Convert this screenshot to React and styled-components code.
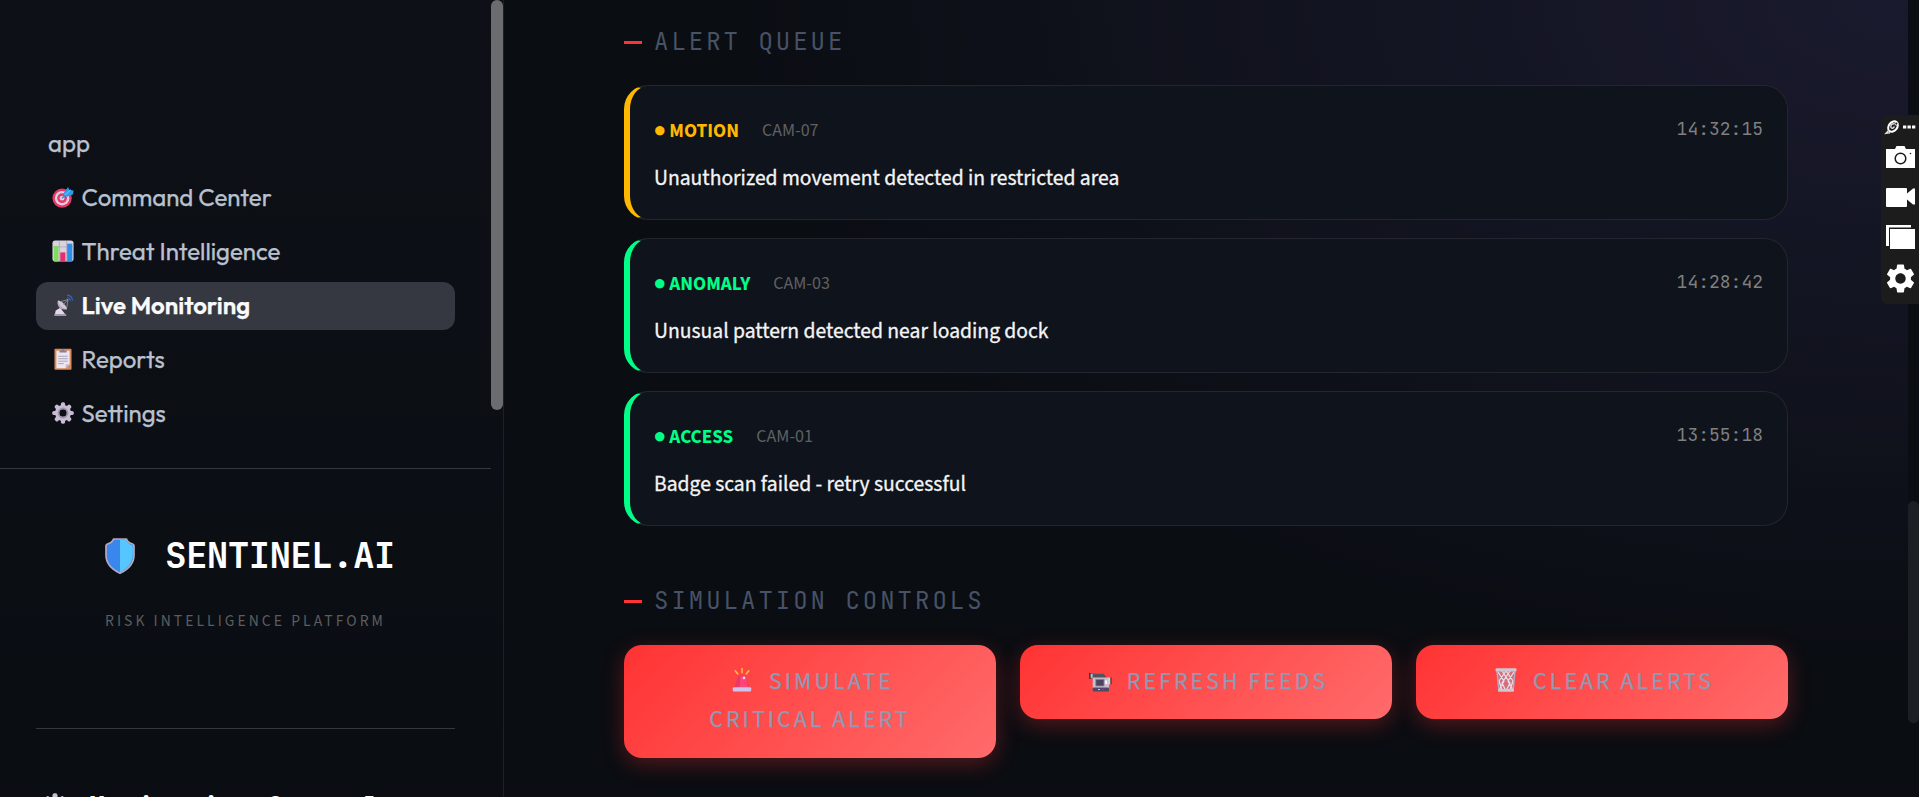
import React from "react";
import styled, { createGlobalStyle } from "styled-components";

const sans = `"Source Sans 3", "Noto Sans CJK JP", sans-serif`;
const mono = `"JetBrains Mono", "DejaVu Sans Mono", monospace`;
const round = `Outfit, Lato, sans-serif`;

const Global = createGlobalStyle`
  * { box-sizing: border-box; }
  body { margin: 0; background: #0a0d12; overflow: hidden; font-family: ${sans}; }
`;

const Page = styled.div`
  display: flex;
  width: 100vw;
  height: 100vh;
  overflow: hidden;
`;

/* ---------- sidebar ---------- */
const Sidebar = styled.aside`
  display: flex;
  flex: none;
  width: 504px;
  height: 100%;
  overflow: hidden;
  border-right: 1px solid #1d2024;
  background: linear-gradient(180deg, #0d1117 0%, #0a0d12 100%);
`;
const SideBody = styled.div`
  width: 491px;
  flex: none;
`;
const SideScroll = styled.div`
  width: 12px;
  height: 410px;
  background: #6b6c6f;
  border-radius: 6px;
`;
const Nav = styled.nav`
  display: flex;
  flex-direction: column;
  gap: 6px;
  padding: 120px 36px 30px;
  height: 468px;
`;
const NavItem = styled.a`
  display: flex;
  align-items: center;
  gap: 5.5px;
  height: 48px;
  padding: 0 12px 2px;
  border-radius: 12px;
  font-family: ${round};
  font-size: 24px;
  font-weight: ${(p) => (p.$active ? 600 : 400)};
  -webkit-text-stroke: 0.25px currentColor;
  color: ${(p) => (p.$active ? "#fafafa" : "#b9c0cf")};
  background: ${(p) => (p.$active ? "#353741" : "transparent")};
`;
const NavIcon = styled.span`
  display: flex;
  justify-content: center;
  width: 28px;
  padding-left: 1px;
  svg { width: 22px; height: 22px; }
`;
const Rule = styled.div`
  height: 1px;
  margin: 0 ${(p) => p.$inset || 0}px;
  background: #35383c;
`;
const Brand = styled.div`
  height: 259px;
  padding-top: 61px;
`;
const BrandRow = styled.div`
  display: flex;
  align-items: center;
  height: 50px;
  padding-left: 102px;
  gap: 27px;
  svg { width: 36px; height: 38px; margin-top: 2px; }
`;
const BrandName = styled.span`
  font: 700 36px/50px ${mono};
  letter-spacing: -0.72px;
  color: #fff;
  white-space: nowrap;
`;
const Tagline = styled.div`
  margin-top: 31px;
  padding-left: 105px;
  font: 400 15.6px/20px ${sans};
  letter-spacing: 3.03px;
  color: #5c5d5e;
  white-space: nowrap;
`;
const SideHeading = styled.div`
  display: flex;
  align-items: flex-start;
  gap: 21px;
  padding: 57px 42px 0;
  color: #fff;
  font: 700 27px/40px ${mono};
  white-space: nowrap;
  svg { width: 26px; height: 26px; flex: none; margin-top: 7px; }
`;

/* ---------- main ---------- */
const Main = styled.main`
  flex: 1;
  height: 100%;
  overflow: hidden;
  padding: 24px 120px 0;
  background: radial-gradient(ellipse at 100% 0%, #1a1a2e 0%, #0a0d12 60%);
`;
const SectionTitle = styled.h2`
  display: flex;
  align-items: center;
  gap: 12px;
  height: 36px;
  margin: 0 0 ${(p) => p.$gap}px;
  font: 400 24px/36px ${mono};
  letter-spacing: 3px;
  color: #475266;
  &::before {
    content: "";
    width: 18px;
    height: 3px;
    background: #ff3333;
  }
`;
const AlertList = styled.div`
  display: flex;
  flex-direction: column;
  gap: 18px;
  margin-bottom: 57px;
`;
const AlertCard = styled.article`
  height: 135px;
  padding: 29px 24px 0 24px;
  border: 1px solid #23262f;
  border-left: 6px solid ${(p) => p.$tone};
  border-radius: 24px;
  background: #0f131b;
`;
const AlertTop = styled.div`
  display: flex;
  align-items: center;
  height: 31px;
`;
const Kind = styled.b`
  font: 700 19.2px/30px ${sans};
  color: ${(p) => p.$tone};
  margin-right: 23px;
`;
const Cam = styled.span`
  font: 400 18px/30px ${sans};
  color: #5f6062;
`;
const Time = styled.time`
  margin: -4px 0 0 auto;
  font: 400 18px/30px ${mono};
  color: #808080;
`;
const AlertText = styled.p`
  margin: 17px 0 0;
  font: 400 21.6px/32px ${sans};
  -webkit-text-stroke: 0.3px currentColor;
  color: #f4f4f5;
`;
const Buttons = styled.div`
  display: grid;
  grid-template-columns: repeat(3, 372px);
  gap: 24px;
  align-items: start;
`;
const ActionButton = styled.button`
  border: 0;
  border-radius: 18px;
  padding: 18px 36px;
  background: linear-gradient(135deg, #ff3333, #ff6b6b);
  box-shadow: 0 6px 22px rgba(255, 51, 51, 0.3);
  font: 400 24px/38.4px ${sans};
  letter-spacing: 3px;
  -webkit-text-stroke: 0.25px currentColor;
  color: #9299b3;
  text-align: center;
  svg { width: 24px; height: 24px; vertical-align: -3px; margin: 0 15px 0 4px; }
`;
const ScrollTrack = styled.div`
  flex: none;
  width: 11px;
  height: 100%;
  padding-top: 501px;
  background: #0a0d12;
`;
const ScrollThumb = styled.div`
  height: 222px;
  background: #1c1f24;
  border-radius: 6px;
`;

/* ---------- floating capture toolbar ---------- */
const Capture = styled.div`
  position: absolute;
  top: 115px;
  right: 0;
  display: flex;
  width: 38px;
  height: 189px;
  border-radius: 6px 0 0 6px;
  background: #1c1c1c;
`;

const Svg = (p) => <svg xmlns="http://www.w3.org/2000/svg" viewBox="0 0 24 24" {...p} />;

const Target = () => (
  <Svg>
    <circle cx="11" cy="13.3" r="10.5" fill="#e93766" />
    <circle cx="11" cy="13.3" r="7.9" fill="#dccfe2" />
    <circle cx="11" cy="13.3" r="5.3" fill="#e93766" />
    <circle cx="11" cy="13.3" r="2.6" fill="#dccfe2" />
    <path d="M11 13.3 17 7" stroke="#3d8fe0" strokeWidth="1.6" />
    <path d="M12.5 8.2 17.5 1 19 4.4 23.5 5 23 9 16 12Z" fill="#2f9bea" />
    <path d="m14 10 6.5-6" stroke="#57c4ff" strokeWidth="1.2" />
  </Svg>
);
const Chart = () => (
  <Svg>
    <rect x=".5" y=".5" width="23" height="23" rx="3" fill="#d9d3e0" />
    <path d="M.5 7.5h23M8 1v22M16 1v22" stroke="#aaa1b5" strokeWidth=".8" />
    <path d="M2 6.5h5v17H2Z" fill="#7fdc5c" />
    <path d="M9 13.5h5.6v10H9Z" fill="#e5306f" />
    <path d="M16.5 4h5.7v19.5h-5.7Z" fill="#2f8fe6" />
  </Svg>
);
const Dish = () => (
  <Svg>
    <path d="m3 23 1-5 5-3 6 8Z" fill="#e2d8e8" />
    <path d="M2.5 21.8h13V24h-13Z" fill="#a395b0" />
    <path d="M6.500 7C4.500 12 8.500 18.500 16.500 16.500Z" fill="#b5a9bd" />
    <path d="M6.500 7c4 .5 9 5 10 9.500-4 0-9.500-4.500-10-9.500Z" fill="#d3c8d8" />
    <path d="m9 8.500 8.500-2.500-1.500 9M12 12l5.500-6" stroke="#a9a0b0" strokeWidth=".8" fill="none" />
    <path d="M16.500 3.800q3.300.4 3.300 3.600M16.500 1.200q5.600.6 5.800 6.200" stroke="#3467be" strokeWidth="1.300" fill="none" />
  </Svg>
);
const Clipboard = () => (
  <Svg>
    <rect x="2.700" y=".8" width="18.600" height="22.800" rx="1" fill="#d98b56" />
    <path d="M4.800 3h14.400v14.800l-4.300 4.200H4.800Z" fill="#ece6f2" />
    <path d="m19.200 17.800-4.300 4.200v-4.200Z" fill="#c7b8cf" />
    <path d="M8 5V2.700h2.300a1.800 1.800 0 0 1 3.400 0H16V5Z" fill="#8c7d94" />
    <path d="M6.800 9h10.400M6.800 11.700h10.400M6.800 14.400h10.400M6.800 17h6" stroke="#a69bb3" strokeWidth="1" />
  </Svg>
);
const Gear = () => (
  <Svg>
    <g fill="#c9bdd6">
      {[0, 45, 90, 135, 180, 225, 270, 315].map((a) => (
        <rect key={a} x="9.700" y=".3" width="4.600" height="6" rx="1.800" transform={`rotate(${a} 12 12)`} />
      ))}
    </g>
    <circle cx="12" cy="12" r="6.400" fill="none" stroke="#c9bdd6" strokeWidth="4.600" />
    <circle cx="12" cy="12" r="5" fill="none" stroke="#9d91ab" strokeWidth="1.800" />
  </Svg>
);
const Shield = () => (
  <Svg viewBox="0 0 36 38">
    <path d="M11.500 2h13q1 3.500 6.500 5.200 1 .5 1 1.500V18c0 8-6 14.500-14 18.300C10 32.500 4 26 4 18V8.700q0-1 1-1.500 5.500-1.700 6.500-5.200Z" fill="#3986ec" stroke="#b3a8c0" strokeWidth="1.700" strokeLinejoin="round" />
    <path d="M18 3h6q1.500 3.800 6.800 5.700V18c0 7.500-5.300 13.500-12.800 17.200Z" fill="#55c6ff" />
  </Svg>
);
const Siren = () => (
  <Svg>
    <path d="M12 .5v4.300M5.200 2.800l2.600 3.200M18.800 2.800l-2.600 3.200" stroke="#ffbd45" strokeWidth="1.500" strokeLinecap="round" />
    <path d="M4.500 20 7.400 9.500Q8.200 7 12 7q3.800 0 4.600 2.500L19.500 20Z" fill="#e8386a" />
    <path d="M9.500 20 10.500 8Q15.500 7 16.300 10L18.500 20Z" fill="#ff4478" />
    <circle cx="14" cy="9.900" r="1.300" fill="#ffd3dd" />
    <rect x="2.800" y="19.300" width="18.400" height="4.200" rx="1" fill="#cfc3ee" />
  </Svg>
);
const Camcorder = () => (
  <Svg>
    <path d="M1 5h3.500l1 .8h10l2.800 3.200v2H4.200v-1H1Z" fill="#56505f" />
    <path d="M1 5h1.700v6H1Z" fill="#3d3947" />
    <path d="M2.700 5.800h2v4h-2Z" fill="#a7c4d1" />
    <rect x="4.700" y="9.500" width="16.300" height="11" fill="#c6bfcc" />
    <rect x="7.800" y="11.300" width="8.200" height="6.700" fill="#4b4360" stroke="#8d86a0" strokeWidth=".8" />
    <rect x="17.300" y="12.500" width="1.800" height="3.500" fill="#fff" />
    <rect x="20.300" y="9.500" width="2" height="6.800" fill="#d8d3de" />
    <rect x="22.300" y="9.500" width="1.700" height="6.800" fill="#56505f" />
    <rect x="4.700" y="19.500" width="16.300" height="4" rx=".8" fill="#514868" />
    <path d="M10 21.500h2" stroke="#c6bfcc" />
    <path d="M14.500 21.500h1" stroke="#e5306f" />
  </Svg>
);
const Basket = () => (
  <Svg>
    <path d="M2.500 2.500h19L19.600 23H4.400Z" fill="#a99bb0" fillOpacity=".5" />
    <path d="m4 4 6 9-4.500 8M8 3l8 12-4 8M12 3l7 10-3 9M20 4l-6 9 4.500 8M16 3 8 15l4 8M12 3l-7 10 3 9" stroke="#e6dceb" strokeWidth="1.300" fill="none" />
    <path d="M3 3 4.800 22M21 3l-1.800 19" stroke="#b5a9bd" strokeWidth="1.500" />
    <rect x="1.500" y=".3" width="21" height="3.200" rx="1.300" fill="#cfc6d4" />
    <rect x="4" y="21" width="16" height="2.700" rx="1" fill="#cfc6d4" />
  </Svg>
);

const CaptureIcons = () => (
  <svg width="38" height="189" viewBox="0 0 38 189" fill="#fff">
    <ellipse cx="12" cy="11.500" rx="4.200" ry="5.800" transform="rotate(38 12 11.500)" fill="none" stroke="#fff" strokeWidth="2" />
    <path d="M13.300 8.800q-3.500-.3-3.500 2.700 0 2.300 2.400 1.500l1.300-1.500M8 15l-3 3.300 4-.6" fill="none" stroke="#ddd" strokeWidth="1.400" />
    <circle cx="15.300" cy="8.600" r="1.500" fill="#1c1c1c" stroke="#fff" />
    <path d="M22 10.500h3.300v3H22Zm4.500 0h3.300v3h-3.300Zm4.500 0h3.300v3H31Z" />
    <path d="M5 34h9l1.500-3h8L25 34h9v19H5Z" />
    <circle cx="19.500" cy="43.500" r="5.300" fill="none" stroke="#1c1c1c" strokeWidth="1.500" />
    <circle cx="29.500" cy="38.500" r=".8" fill="#1c1c1c" />
    <path d="M6 73h19a1 1 0 0 1 1 1v4.500l6-5h2v16h-2l-6-5V91a1 1 0 0 1-1 1H6a1 1 0 0 1-1-1V74a1 1 0 0 1 1-1Z" />
    <path d="M5 110h25v2.500H8V131H5Z" />
    <path d="M9 114h25v20H9Z" />
    <path transform="translate(2.100 146.100) scale(1.450)" d="M19.140 12.940c.04-.3.06-.61.06-.94 0-.32-.02-.64-.07-.94l2.030-1.580a.49.49 0 0 0 .12-.61l-1.920-3.320a.488.488 0 0 0-.59-.22l-2.390.96c-.5-.38-1.030-.7-1.620-.94l-.36-2.540a.484.484 0 0 0-.48-.41h-3.840c-.24 0-.43.17-.47.41l-.36 2.540c-.59.24-1.130.57-1.620.94l-2.390-.96c-.22-.08-.47 0-.59.22L2.740 8.870c-.12.21-.08.47.12.61l2.030 1.580c-.05.3-.09.63-.09.94s.02.64.07.94l-2.030 1.580a.49.49 0 0 0-.12.610l1.920 3.320c.12.220.370.290.590.220l2.390-.96c.5.380 1.030.7 1.620.94l.36 2.540c.05.240.24.410.48.410h3.840c.24 0 .440-.170.470-.410l.36-2.540c.59-.240 1.130-.560 1.620-.94l2.390.96c.220.080.470 0 .590-.220l1.920-3.320c.120-.220.070-.470-.120-.610l-2.010-1.580zM12 15.600c-1.980 0-3.600-1.620-3.600-3.600s1.620-3.600 3.600-3.600 3.600 1.620 3.600 3.600-1.620 3.600-3.600 3.600z" />
  </svg>
);

const nav = [
  { label: "app" },
  { label: "Command Center", icon: <Target /> },
  { label: "Threat Intelligence", icon: <Chart /> },
  { label: "Live Monitoring", icon: <Dish />, active: true },
  { label: "Reports", icon: <Clipboard /> },
  { label: "Settings", icon: <Gear /> },
];
const alerts = [
  { kind: "MOTION", cam: "CAM-07", time: "14:32:15", tone: "#ffb800", text: "Unauthorized movement detected in restricted area" },
  { kind: "ANOMALY", cam: "CAM-03", time: "14:28:42", tone: "#00ff88", text: "Unusual pattern detected near loading dock" },
  { kind: "ACCESS", cam: "CAM-01", time: "13:55:18", tone: "#00ff88", text: "Badge scan failed - retry successful" },
];

export default function App() {
  return (
    <Page>
      <Global />
      <Sidebar>
        <SideBody>
          <Nav>
            {nav.map((n) => (
              <NavItem key={n.label} $active={n.active}>
                {n.icon && <NavIcon>{n.icon}</NavIcon>}
                <span>{n.label}</span>
              </NavItem>
            ))}
          </Nav>
          <Rule />
          <Brand>
            <BrandRow>
              <Shield />
              <BrandName>SENTINEL.AI</BrandName>
            </BrandRow>
            <Tagline>RISK INTELLIGENCE PLATFORM</Tagline>
          </Brand>
          <Rule $inset={36} />
          <SideHeading>
            <Gear />
            <span>Monitoring Control</span>
          </SideHeading>
        </SideBody>
        <SideScroll />
      </Sidebar>
      <Main>
        <SectionTitle $gap={25}>ALERT QUEUE</SectionTitle>
        <AlertList>
          {alerts.map((a) => (
            <AlertCard key={a.kind} $tone={a.tone}>
              <AlertTop>
                <Kind $tone={a.tone}>● {a.kind}</Kind>
                <Cam>{a.cam}</Cam>
                <Time>{a.time}</Time>
              </AlertTop>
              <AlertText>{a.text}</AlertText>
            </AlertCard>
          ))}
        </AlertList>
        <SectionTitle $gap={26}>SIMULATION CONTROLS</SectionTitle>
        <Buttons>
          <ActionButton><Siren />SIMULATE<br />CRITICAL ALERT</ActionButton>
          <ActionButton><Camcorder />REFRESH FEEDS</ActionButton>
          <ActionButton><Basket />CLEAR ALERTS</ActionButton>
        </Buttons>
      </Main>
      <ScrollTrack><ScrollThumb /></ScrollTrack>
      <Capture><CaptureIcons /></Capture>
    </Page>
  );
}
